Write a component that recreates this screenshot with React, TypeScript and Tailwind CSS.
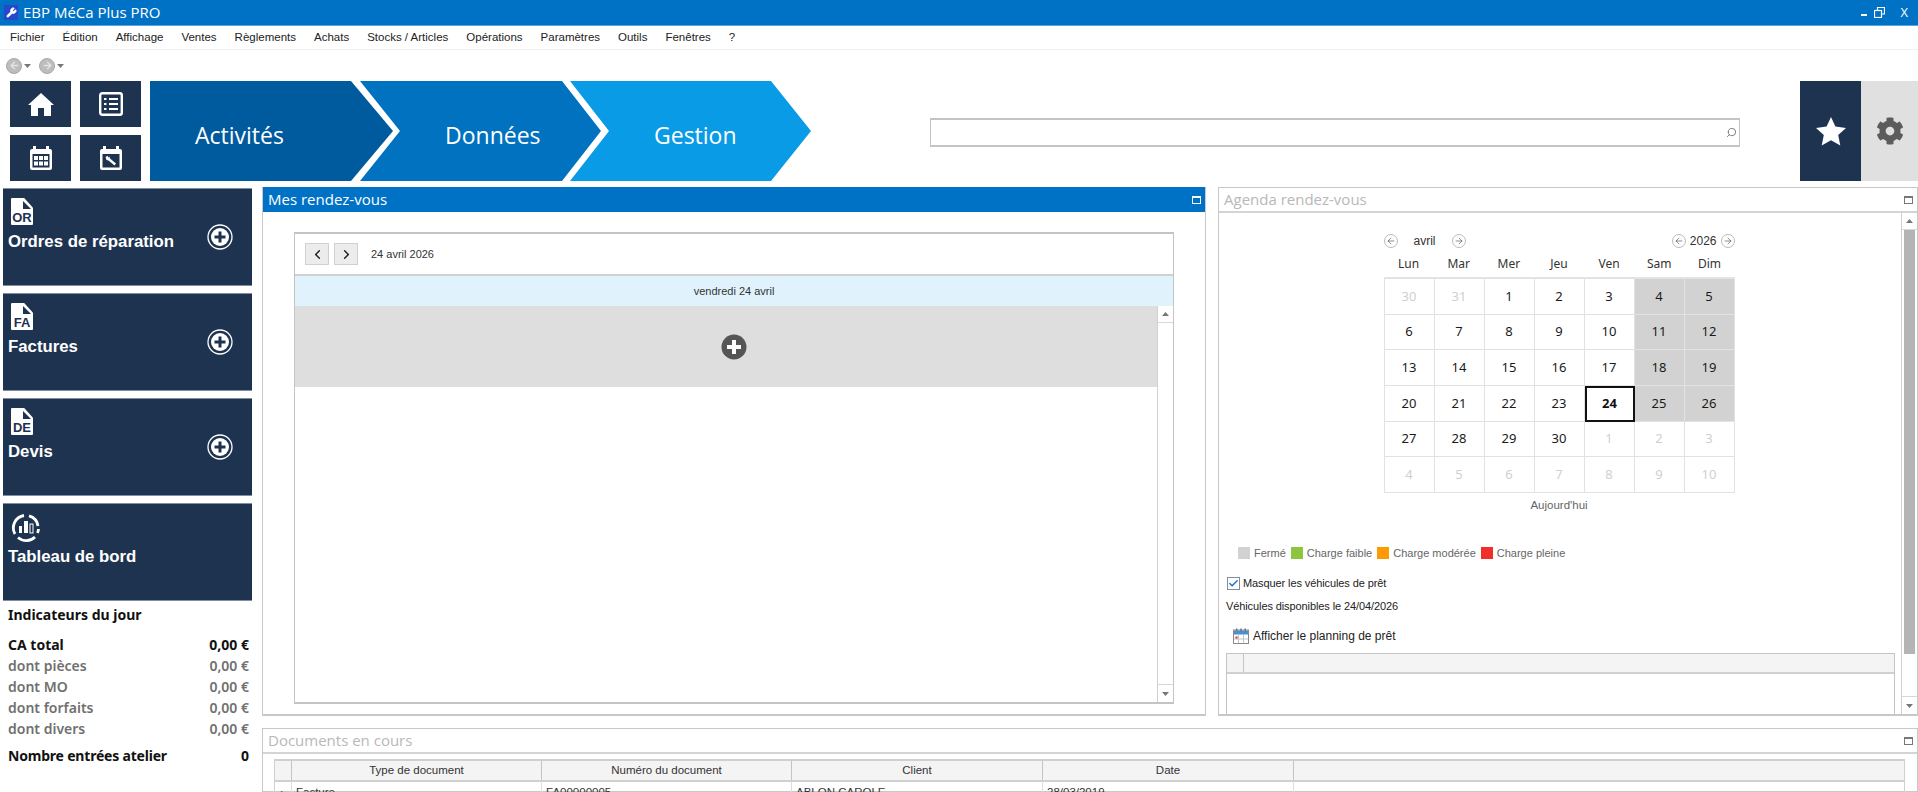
import { ArrowLeft, ArrowRight, Check, ChevronLeft, ChevronRight, Search, Wrench } from 'lucide-react';
import { FaCog } from 'react-icons/fa';

const menuItems = ['Fichier', 'Édition', 'Affichage', 'Ventes', 'Règlements', 'Achats', 'Stocks / Articles', 'Opérations', 'Paramètres', 'Outils', 'Fenêtres', '?'];
const weekDays = ['Lun', 'Mar', 'Mer', 'Jeu', 'Ven', 'Sam', 'Dim'];
const calendarDays = [
    30, 31, 1, 2, 3, 4, 5,
    6, 7, 8, 9, 10, 11, 12,
    13, 14, 15, 16, 17, 18, 19,
    20, 21, 22, 23, 24, 25, 26,
    27, 28, 29, 30, 1, 2, 3,
    4, 5, 6, 7, 8, 9, 10,
];
const indicators = ['dont pièces', 'dont MO', 'dont forfaits', 'dont divers'];

function HomeIcon() {
    return (
        <svg width="26" height="25" viewBox="0 0 26 25" fill="white">
            <path d="M13 1 L26 13 L23 13 L23 24 L16 24 L16 16 L10 16 L10 24 L3 24 L3 13 L0 13 Z" />
        </svg>
    );
}

function ListIcon() {
    return (
        <svg width="24" height="24" viewBox="0 0 24 24" fill="none" stroke="white">
            <rect x="1.2" y="1.2" width="21.6" height="21.6" rx="2" strokeWidth="2.4" />
            <g strokeWidth="2.2">
                <path d="M5 7h2.5M10 7h9M5 12h2.5M10 12h9M5 17h2.5M10 17h9" />
            </g>
        </svg>
    );
}

function CalendarIcon() {
    return (
        <svg width="24" height="25" viewBox="0 0 24 25" fill="white">
            <rect x="4" y="0" width="3" height="5" />
            <rect x="17" y="0" width="3" height="5" />
            <path fillRule="evenodd" d="M1 5 a2 2 0 0 1 2-2 H21 a2 2 0 0 1 2 2 V22 a2 2 0 0 1-2 2 H3 a2 2 0 0 1-2-2 Z M3.5 8 V21.5 H20.5 V8 Z" />
            <rect x="5" y="10" width="4" height="4" />
            <rect x="10" y="10" width="4" height="4" />
            <rect x="15" y="10" width="4" height="4" />
            <rect x="5" y="15.5" width="4" height="4" />
            <rect x="10" y="15.5" width="4" height="4" />
            <rect x="15" y="15.5" width="4" height="4" />
        </svg>
    );
}

function CalendarToolIcon() {
    return (
        <svg width="24" height="25" viewBox="0 0 24 25" fill="white">
            <rect x="4" y="0" width="3" height="5" />
            <rect x="17" y="0" width="3" height="5" />
            <path fillRule="evenodd" d="M1 5 a2 2 0 0 1 2-2 H21 a2 2 0 0 1 2 2 V22 a2 2 0 0 1-2 2 H3 a2 2 0 0 1-2-2 Z M3.5 8 V21.5 H20.5 V8 Z" />
            <path d="M6.5 11 L8.5 9.8 L9.5 11.5 L10.5 10.5 L11 12.5 L17 17.5 L15.5 19.5 L9.5 14.5 L7.5 14 Z" />
        </svg>
    );
}

function DocIcon({ label }: { label: string }) {
    return (
        <div className="relative w-[22px] h-[27px] bg-white rounded-[1px] [clip-path:polygon(0_0,60%_0,100%_36%,100%_100%,0_100%)]">
            <svg className="absolute left-0 top-0" width="22" height="14" viewBox="0 0 22 14">
                <path d="M12 3 L20 11 L12 11 Z" fill="#1e3350" />
            </svg>
            <span className="absolute left-0 right-0 bottom-[1px] text-center text-[#1e3350] text-[13px] leading-[13px] font-bold font-['Liberation_Sans',sans-serif]">{label}</span>
        </div>
    );
}

function DashboardIcon() {
    return (
        <svg width="30" height="30" viewBox="0 0 30 30" fill="none" stroke="white">
            <path d="M13 2.5 A12.5 12.5 0 0 0 4 21" strokeWidth="2.8" />
            <path d="M7 24.5 A12.5 12.5 0 0 0 24 24" strokeWidth="2.8" />
            <path d="M18 2.8 A12.5 12.5 0 0 1 27 13" strokeWidth="2.8" />
            <path d="M27.5 16 A12.5 12.5 0 0 1 26.5 20" strokeWidth="2.8" />
            <rect x="8" y="13" width="3" height="7" fill="white" stroke="none" />
            <rect x="13" y="8" width="4" height="12" fill="white" stroke="none" />
            <rect x="19" y="11" width="3" height="9" strokeWidth="1" />
        </svg>
    );
}

function PlusBadge() {
    return (
        <svg width="26" height="26" viewBox="0 0 26 26">
            <circle cx="13" cy="13" r="12" fill="none" stroke="white" strokeWidth="1.3" />
            <circle cx="13" cy="13" r="9" fill="white" />
            <path d="M13 7.5v11M7.5 13h11" stroke="#1e3350" strokeWidth="3" />
        </svg>
    );
}

function SmallTile({ children }: { children: React.ReactNode }) {
    return <div className="h-[46px] w-[61px] bg-[#1e3350] flex items-center justify-center">{children}</div>;
}

function ActionTile({ icon, title, plus = true }: { icon: React.ReactNode; title: string; plus?: boolean }) {
    return (
        <div className="h-[98px] bg-[#1e3350] border-y border-[#7f8ea3] flex justify-between pl-[5px] pr-[19px]">
            <div className="pt-[9px]">
                <div className="h-[31px] pl-[3px]">{icon}</div>
                <div className="mt-[3px] text-white text-[16.8px] leading-[20px] font-bold font-['Liberation_Sans',sans-serif]">{title}</div>
            </div>
            {plus && <div className="pt-[35px]"><PlusBadge /></div>}
        </div>
    );
}

function Indicator({ label, strong = false }: { label: string; strong?: boolean }) {
    return (
        <div className={`flex justify-between h-[21px] items-center ${strong ? 'font-bold text-[#111]' : 'font-semibold text-[#707070]'}`}>
            <span>{label}</span>
            <span>0,00 €</span>
        </div>
    );
}

function Triangle({ up }: { up?: boolean }) {
    return (
        <svg width="7" height="4" viewBox="0 0 7 4" fill="#777">
            <path d={up ? 'M3.5 0 L7 4 H0 Z' : 'M0 0 H7 L3.5 4 Z'} />
        </svg>
    );
}

function RestoreIcon() {
    return (
        <svg width="11" height="11" viewBox="0 0 11 11" fill="none" stroke="white">
            <path d="M3.5 3 V0.5 H10.5 V7 H8" strokeWidth="1.2" />
            <rect x="0.5" y="3.5" width="7" height="7" strokeWidth="1.2" />
        </svg>
    );
}

function PanelHeader({ title, active = false }: { title: string; active?: boolean }) {
    return (
        <div className={`h-[25px] shrink-0 flex items-center justify-between pl-[5px] pr-[4px] font-['Open_Sans',sans-serif] text-[15px] ${active ? 'bg-[#0072c6] text-white' : 'border-b-2 border-[#d4d4d4] text-[#b8b8b8]'}`}>
            <span>{title}</span>
            <div className={`w-[9px] h-[8px] border ${active ? 'border-white border-t-2' : 'border-[#777] border-t-2'}`} />
        </div>
    );
}

function CalendarNav({ label, wide = false }: { label: string; wide?: boolean }) {
    return (
        <div className={`flex items-center text-[12px] text-[#333] ${wide ? 'gap-[16px]' : 'gap-[4px]'}`}>
            <span className="w-[14px] h-[14px] rounded-full border border-[#bbb] flex items-center justify-center"><ArrowLeft size={10} strokeWidth={1.6} color="#555" /></span>
            <span>{label}</span>
            <span className="w-[14px] h-[14px] rounded-full border border-[#bbb] flex items-center justify-center"><ArrowRight size={10} strokeWidth={1.6} color="#555" /></span>
        </div>
    );
}

function Legend({ color, label }: { color: string; label: string }) {
    return (
        <div className="flex items-center gap-[4px]">
            <span className={`w-[12px] h-[12px] ${color}`} />
            <span>{label}</span>
        </div>
    );
}

function Scrollbar({ thumb = false }: { thumb?: boolean }) {
    return (
        <div className="w-[16px] shrink-0 border-l border-[#d0d0d0] flex flex-col">
            <div className="h-[17px] border-b border-[#d8d8d8] flex items-center justify-center"><Triangle up /></div>
            <div className="flex-1 flex flex-col">
                {thumb && <div className="h-[91%] mx-[2px] bg-[#b4b4b4]" />}
            </div>
            <div className="h-[18px] border-t border-[#d8d8d8] flex items-center justify-center"><Triangle /></div>
        </div>
    );
}

function MiniPlanningIcon() {
    return (
        <svg width="16" height="16" viewBox="0 0 16 16">
            <rect x="0.5" y="2" width="15" height="13.5" fill="#fff" stroke="#8a8a8a" />
            <rect x="1" y="2.5" width="14" height="4" fill="#4a90d0" />
            <rect x="3" y="0.5" width="1.5" height="3" fill="#777" />
            <rect x="7.2" y="0.5" width="1.5" height="3" fill="#777" />
            <rect x="11.5" y="0.5" width="1.5" height="3" fill="#777" />
            <path d="M5.5 7v8M10.5 7v8M1 11h14" stroke="#c4c4c4" />
            <rect x="2.5" y="8.5" width="2" height="2" fill="#d22" />
        </svg>
    );
}

export default function App() {
    return (
        <div className="w-[1918px] h-[792px] overflow-hidden bg-white flex flex-col font-['Liberation_Sans',sans-serif] text-[11.5px] text-[#222]">
            {/* title bar */}
            <div className="h-[26px] shrink-0 bg-[#0072c6] border-b border-[#5ba5dc] flex items-center justify-between pl-[4px] pr-[10px] text-white font-['Open_Sans',sans-serif]">
                <div className="flex items-center gap-[5px]">
                    <div className="w-[14px] h-[15px] bg-[#2746c9] flex items-center justify-center"><Wrench size={11} color="white" fill="white" /></div>
                    <span className="text-[15px]">EBP MéCa Plus PRO</span>
                </div>
                <div className="flex items-center gap-[7px] text-[13px]">
                    <div className="w-[6px] h-[2px] bg-white mt-[5px]" />
                    <RestoreIcon />
                    <span className="ml-[8px]">X</span>
                </div>
            </div>

            {/* menu */}
            <div className="h-[24px] shrink-0 border-b border-[#f0f0f0] flex items-center gap-[18px] pl-[10px] text-[#222]">
                {menuItems.map(item => <span key={item}>{item}</span>)}
            </div>

            {/* back / forward */}
            <div className="h-[31px] shrink-0 flex items-center gap-[8px] pl-[6px]">
                {[ArrowLeft, ArrowRight].map((Arrow, i) => (
                    <div key={i} className="flex items-center gap-[2px]">
                        <span className="w-[16px] h-[16px] rounded-full bg-[#bdbdbd] border border-[#a8a8a8] flex items-center justify-center"><Arrow size={11} color="#e4e4e4" strokeWidth={3} /></span>
                        <Triangle />
                    </div>
                ))}
            </div>

            {/* ribbon */}
            <div className="h-[100px] shrink-0 flex pl-[10px]">
                <div className="grid grid-cols-[61px_61px] gap-x-[9px] gap-y-[8px]">
                    <SmallTile><HomeIcon /></SmallTile>
                    <SmallTile><ListIcon /></SmallTile>
                    <SmallTile><CalendarIcon /></SmallTile>
                    <SmallTile><CalendarToolIcon /></SmallTile>
                </div>
                <div className="flex ml-[9px] text-white text-[23px] font-['Open_Sans',sans-serif]">
                    <div className="w-[243px] h-[100px] pt-[8px] bg-[#005a9e] flex items-center pl-[45px] [clip-path:polygon(0_0,201px_0,243px_50%,201px_100%,0_100%)]">Activités</div>
                    <div className="w-[241px] h-[100px] pt-[8px] -ml-[33px] bg-[#0072c0] flex items-center pl-[85px] [clip-path:polygon(0_0,202px_0,241px_50%,202px_100%,0_100%,40px_50%)]">Données</div>
                    <div className="w-[241px] h-[100px] pt-[8px] -ml-[31px] bg-[#0a9be6] flex items-center pl-[84px] [clip-path:polygon(0_0,201px_0,241px_50%,201px_100%,0_100%,39px_50%)]">Gestion</div>
                </div>
                <div className="ml-[119px] mt-[37px] w-[810px] h-[29px] border border-[#c4c4c4] border-t-2 border-b-2 flex items-center justify-end pr-[2px]">
                    <Search size={11} color="#777" className="-scale-x-100" />
                </div>
                <div className="ml-[60px] w-[61px] bg-[#1e3350] flex items-center justify-center">
                    <svg width="30" height="29" viewBox="0 0 30 29" fill="white">
                        <path d="M15 0 L19.4 9.6 L30 10.9 L22.2 18 L24.3 28.5 L15 23.2 L5.7 28.5 L7.8 18 L0 10.9 L10.6 9.6 Z" />
                    </svg>
                </div>
                <div className="w-[57px] bg-[#e0e0e0] flex items-center justify-center">
                    <FaCog size={28} color="#5c5c5c" />
                </div>
            </div>

            {/* main */}
            <div className="flex-1 min-h-0 flex mt-[6px]">
                <div className="w-[249px] ml-[3px] shrink-0 flex flex-col gap-[7px] mt-[1px]">
                    <ActionTile icon={<DocIcon label="OR" />} title="Ordres de réparation" />
                    <ActionTile icon={<DocIcon label="FA" />} title="Factures" />
                    <ActionTile icon={<DocIcon label="DE" />} title="Devis" />
                    <ActionTile icon={<DashboardIcon />} title="Tableau de bord" plus={false} />
                    <div className="pl-[5px] pr-[3px] -mt-[4px] text-[14px] font-['Noto_Sans',sans-serif]">
                        <div className="font-bold text-[#111] h-[21px] flex items-center">Indicateurs du jour</div>
                        <div className="mt-[9px]">
                            <Indicator label="CA total" strong />
                            {indicators.map(label => <Indicator key={label} label={label} />)}
                        </div>
                        <div className="flex justify-between h-[21px] items-center font-bold text-[#111] mt-[6px]">
                            <span className="tracking-[-0.2px]">Nombre entrées atelier</span>
                            <span>0</span>
                        </div>
                    </div>
                </div>

                <div className="flex-1 min-w-0 flex flex-col ml-[10px]">
                    <div className="h-[529px] shrink-0 flex gap-[12px]">
                        {/* mes rendez-vous */}
                        <div className="w-[944px] shrink-0 border-x border-b-2 border-[#c8c8c8] flex flex-col">
                            <PanelHeader title="Mes rendez-vous" active />
                            <div className="flex-1 min-h-0 pl-[31px] pr-[31px] pt-[20px] pb-[10px] flex">
                                <div className="flex-1 border border-t-2 border-b-2 border-[#c4c4c4] flex flex-col">
                                    <div className="h-[40px] shrink-0 flex items-center pl-[10px] text-[11px] text-[#333]">
                                        <span className="w-[24px] h-[22px] bg-[#ececec] border border-[#d0d0d0] flex items-center justify-center"><ChevronLeft size={15} color="#222" strokeWidth={2.4} /></span>
                                        <span className="w-[24px] h-[22px] ml-[5px] bg-[#ececec] border border-[#d0d0d0] flex items-center justify-center"><ChevronRight size={15} color="#222" strokeWidth={2.4} /></span>
                                        <span className="ml-[13px]">24 avril 2026</span>
                                    </div>
                                    <div className="h-[32px] shrink-0 border-t-2 border-[#d0d0d0] bg-[#e0f3fd] flex items-center justify-center text-[11px] text-[#333]">vendredi 24 avril</div>
                                    <div className="flex-1 min-h-0 flex">
                                        <div className="flex-1">
                                            <div className="h-[81px] bg-[#dedede] flex items-center justify-center pl-[16px]">
                                                <svg width="26" height="26" viewBox="0 0 26 26">
                                                    <circle cx="13" cy="13" r="12.5" fill="#555" />
                                                    <path d="M13 6v14M6 13h14" stroke="white" strokeWidth="4" />
                                                </svg>
                                            </div>
                                        </div>
                                        <Scrollbar />
                                    </div>
                                </div>
                            </div>
                        </div>

                        {/* agenda */}
                        <div className="flex-1 min-w-0 border-x border-t border-b-2 border-[#c8c8c8] flex flex-col">
                            <PanelHeader title="Agenda rendez-vous" />
                            <div className="flex-1 min-h-0 flex">
                                <div className="flex-1 min-w-0 overflow-hidden">
                                    <div className="w-[351px] mx-auto mt-[20px] -translate-x-[1px]">
                                        <div className="flex justify-between h-[16px] items-center">
                                            <CalendarNav label="avril" wide />
                                            <CalendarNav label="2026" />
                                        </div>
                                        <div className="grid grid-cols-7 h-[27px] mt-[2px] border-b border-[#e4e4e4] font-['Noto_Sans',sans-serif] text-[12px] text-[#333]">
                                            {weekDays.map(day => <div key={day} className="flex items-center justify-center">{day}</div>)}
                                        </div>
                                        <div className="grid grid-cols-7 grid-rows-6 h-[215px] border-l border-t border-[#e2e2e2] font-['Noto_Sans',sans-serif] text-[13px]">
                                            {calendarDays.map((day, i) => {
                                                const muted = i < 2 || i >= 32;
                                                const closed = !muted && i % 7 >= 5;
                                                if (i === 25) {
                                                    return <div key={i} className="flex items-center justify-center border-2 border-[#111] font-bold text-[#111]">{day}</div>;
                                                }
                                                return (
                                                    <div key={i} className={`flex items-center justify-center border-r border-b border-[#e2e2e2] ${closed ? 'bg-[#d2d2d2]' : ''} ${muted ? 'text-[#cfcfcf]' : 'text-[#1a1a1a]'}`}>{day}</div>
                                                );
                                            })}
                                        </div>
                                        <div className="text-center text-[#666] mt-[4px]">Aujourd'hui</div>
                                    </div>
                                    <div className="pl-[19px] mt-[31px] flex gap-[5px] text-[11px] text-[#666] h-[16px] items-center">
                                        <Legend color="bg-[#d2d2d2]" label="Fermé" />
                                        <Legend color="bg-[#8cc63f]" label="Charge faible" />
                                        <Legend color="bg-[#ff9a00]" label="Charge modérée" />
                                        <Legend color="bg-[#f0302b]" label="Charge pleine" />
                                    </div>
                                    <div className="pl-[8px] mt-[14px] flex items-center gap-[3px] text-[11px] tracking-[-0.1px] text-[#222] h-[16px]">
                                        <span className="w-[13px] h-[13px] border border-[#7b8ea0] flex items-center justify-center"><Check size={11} color="#1a6fc4" strokeWidth={3} /></span>
                                        <span>Masquer les véhicules de prêt</span>
                                    </div>
                                    <div className="pl-[7px] mt-[7px] h-[16px] flex items-center text-[11px] tracking-[-0.1px] text-[#222]">Véhicules disponibles le 24/04/2026</div>
                                    <div className="pl-[14px] mt-[14px] flex items-center gap-[4px] text-[12px] text-[#222] h-[16px]">
                                        <MiniPlanningIcon />
                                        <span>Afficher le planning de prêt</span>
                                    </div>
                                    <div className="ml-[7px] mr-[6px] mt-[9px] h-[80px] border border-[#c4c4c4]">
                                        <div className="h-[20px] bg-[#f4f4f4] border-b-2 border-[#d0d0d0] flex">
                                            <div className="w-[17px] border-r border-[#c4c4c4]" />
                                        </div>
                                    </div>
                                </div>
                                <Scrollbar thumb />
                            </div>
                        </div>
                    </div>

                    {/* documents en cours */}
                    <div className="mt-[12px] flex-1 min-h-0 border border-[#c8c8c8] flex flex-col">
                        <PanelHeader title="Documents en cours" />
                        <div className="pl-[11px] pr-[12px] pt-[5px] text-[#333]">
                            <div className="border-t-2 border-l border-r border-[#d0d0d0]">
                                <div className="grid grid-cols-[17px_250px_250px_251px_251px_1fr] h-[21px] bg-[#f4f4f4] border-b-2 border-[#d0d0d0]">
                                    <div className="border-r border-[#c4c4c4]" />
                                    <div className="border-r border-[#c4c4c4] flex items-center justify-center">Type de document</div>
                                    <div className="border-r border-[#c4c4c4] flex items-center justify-center">Numéro du document</div>
                                    <div className="border-r border-[#c4c4c4] flex items-center justify-center">Client</div>
                                    <div className="border-r border-[#c4c4c4] flex items-center justify-center">Date</div>
                                    <div />
                                </div>
                                <div className="grid grid-cols-[17px_250px_250px_251px_251px_1fr] h-[21px]">
                                    <div className="border-r border-[#ddd] flex items-center justify-center text-[8px]">▸</div>
                                    <div className="border-r border-[#ddd] pl-[4px] flex items-center">Facture</div>
                                    <div className="border-r border-[#ddd] pl-[4px] flex items-center">FA00000005</div>
                                    <div className="border-r border-[#ddd] pl-[4px] flex items-center">ABLON CAROLE</div>
                                    <div className="border-r border-[#ddd] pl-[4px] flex items-center">28/03/2019</div>
                                    <div />
                                </div>
                            </div>
                        </div>
                    </div>
                </div>
            </div>
        </div>
    );
}
